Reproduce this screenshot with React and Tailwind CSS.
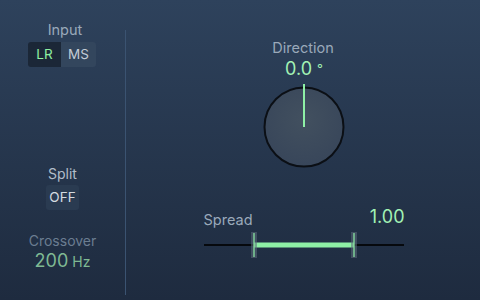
import React from 'react';

const font = { fontFamily: 'Inter, "Noto Sans", sans-serif' };

function Knob() {
    return (
        <svg width="84" height="86" viewBox="0 0 84 86">
            <defs>
                <radialGradient id="kf" cx="50%" cy="40%" r="60%">
                    <stop offset="0%" stopColor="#42505f" />
                    <stop offset="100%" stopColor="#38465a" />
                </radialGradient>
            </defs>
            <circle cx="42" cy="44" r="39.5" fill="url(#kf)" stroke="#0b0f15" strokeWidth="2" />
            <line x1="42" y1="1" x2="42" y2="44" stroke="#8ef0a6" strokeWidth="2" />
        </svg>
    );
}

function SpreadSlider() {
    return (
        <svg width="200" height="28" viewBox="0 0 200 28">
            <line x1="0" y1="14" x2="200" y2="14" stroke="#06090d" strokeWidth="2" />
            <rect x="50" y="11.5" width="100" height="5" fill="#8ef0a6" />
            <rect x="47" y="1" width="6" height="26" fill="#5d6b7a" opacity="0.55" />
            <line x1="50" y1="2" x2="50" y2="26" stroke="#8ef0a6" strokeWidth="1.2" />
            <rect x="147" y="1" width="6" height="26" fill="#5d6b7a" opacity="0.55" />
            <line x1="150" y1="2" x2="150" y2="26" stroke="#8ef0a6" strokeWidth="1.2" />
        </svg>
    );
}

export default function App() {
    return (
        <div
            className="w-[480px] h-[300px] flex bg-gradient-to-b from-[#2e425c] to-[#1e2b3f] overflow-hidden"
            style={font}
        >
            {/* left column */}
            <div className="w-[125px] flex flex-col items-center pt-[21px]">
                <div className="text-[14.5px] leading-[17px] text-[#9aa9ba] ml-[5px]">Input</div>
                <div className="mt-[4px] flex ml-[-1px]">
                    <div className="w-[33px] h-[25px] rounded-l-[3px] bg-[#1b2737] text-[#8ff0a2] text-[13.5px] flex items-center justify-center">
                        LR
                    </div>
                    <div className="w-[35px] h-[25px] rounded-r-[3px] bg-[#33465d] text-[#c3ccd6] text-[13.5px] flex items-center justify-center">
                        MS
                    </div>
                </div>

                <div className="mt-[98px] text-[14px] leading-[17px] text-[#b2bdc9]">Split</div>
                <div className="mt-[3px] w-[33px] h-[25px] rounded-[3px] bg-[#2a3b51] text-[#d4dae0] text-[13.5px] flex items-center justify-center">
                    OFF
                </div>

                <div className="mt-[22px] text-[14px] leading-[17px] text-[#6b7d91]">Crossover</div>
                <div className="mt-[1px] leading-[22px] text-[#7fb993]">
                    <span className="text-[18px]">200</span>
                    <span className="text-[14px] ml-[4px]">Hz</span>
                </div>
            </div>

            {/* divider */}
            <div className="w-px mt-[30px] mb-[5px] bg-[#3b5371]" />

            {/* right column */}
            <div className="flex-1 flex flex-col items-center pt-[39px]">
                <div className="text-[14.5px] leading-[17px] text-[#9aa9ba]">Direction</div>
                <div className="leading-[22px] text-[#a2f2b4] mt-[2px] ml-[2px]">
                    <span className="text-[18px]">0.0</span>
                    <span className="text-[13px] ml-[5px] align-top">°</span>
                </div>
                <div className="mt-[3px] ml-[1px]">
                    <Knob />
                </div>

                <div className="mt-[37px] w-[200px] ml-[1px] flex items-end justify-between">
                    <span className="text-[14.5px] leading-[17px] text-[#9aa9ba]">Spread</span>
                    <span className="text-[18px] leading-[22px] text-[#a2f2b4] mr-[-1px]">1.00</span>
                </div>
                <div className="mt-[3px] ml-[1px]">
                    <SpreadSlider />
                </div>
            </div>
        </div>
    );
}
